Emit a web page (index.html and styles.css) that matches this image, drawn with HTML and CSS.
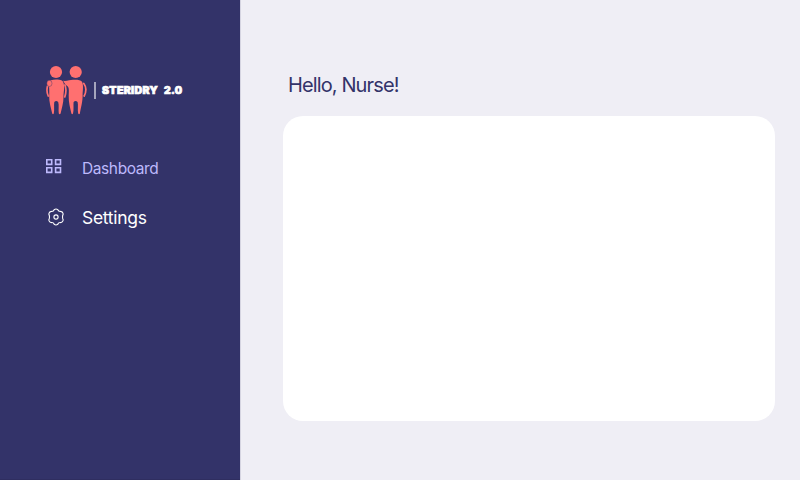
FILE: index.html
```html
<!DOCTYPE html>
<html lang="en">
<head>
<meta charset="utf-8">
<title>Steridry 2.0</title>
<link rel="stylesheet" href="styles.css">
</head>
<body>
<div class="app">
  <aside class="sidebar">
    <div class="brand">
      <svg class="brand-figures" viewBox="0 0 42 50" width="42" height="50">
        <circle cx="10" cy="7" r="6.1"/>
        <circle cx="29.7" cy="7" r="6.1"/>
        <path d="M5 15.2C8 14.4 13 14.4 15.8 15.4C17.5 16.5 18.2 19 18.2 23C18 26 17.4 29 17.5 32C17.6 38 15.5 44 14.6 48.6Q13.7 49.8 12.8 48.6C12.2 45 13.2 40 12.2 37Q10.2 34.8 8.3 37C7.7 40 8.6 45 7.8 48.6Q7 49.8 6.2 48.6C5 43 3 37 3.2 31C3.4 27 3.3 24 3 21C2.6 18 3.4 15.7 5 15.2Z"/>
        <path d="M17.2 15.8C21 16.2 24 14.9 27 14.8C31 14.6 34.5 14.8 36 16.8C37.5 19.5 37 25 36.6 29C36.9 37 34.6 43 33.9 48.6Q33 49.8 32.2 48.6C31.4 45 32.4 40 31.6 37Q29.6 34.8 27.6 37C27.2 40 28 45 27 48.6Q26.2 49.8 25.4 48.6C24.2 43 22.5 37 22.7 31C22.9 27 23.2 23 21.8 21.5C19.5 20 18.4 18.5 17.2 15.8Z"/>
        <path class="arm" d="M1.5 21C.8 24 .8 28 2.2 31M18.9 20C20.2 23 20.4 27 18.8 32M37.8 18.5C40.4 22 40.2 27 38.2 31"/>
        <ellipse class="hand" cx="3.4" cy="18.4" rx="2.6" ry="3.1"/>
      </svg>
      <span class="divider"></span>
      <svg class="wordmark" width="83" height="14" viewBox="0 0 83 14"><text x="1" y="11" textLength="56" lengthAdjust="spacingAndGlyphs">STERIDRY</text><text x="63" y="11" textLength="18.5" lengthAdjust="spacingAndGlyphs">2.0</text></svg>
    </div>
    <nav class="menu">
      <a class="item active">
        <svg class="icon-grid" width="16" height="16" viewBox="0 0 16 16"><path d="M.8 1.8h4.9v4.6H.8zM9.6 1.8h4.9v4.6H9.6zM.8 9.8h4.9v4.6H.8zM9.6 9.8h4.9v4.6H9.6z"/></svg>
        <span>Dashboard</span>
      </a>
      <a class="item settings">
        <svg class="icon-gear" width="18" height="18" viewBox="0 0 18 18"><path d="M7.2 1.7Q9 .3 10.8 1.7Q11.6 3.7 13.7 3.4Q16 3.7 16.2 6Q14.8 9 16.2 12Q16 14.3 13.7 14.6Q11.6 14.3 10.8 16.3Q9 17.7 7.2 16.3Q6.4 14.3 4.3 14.6Q2 14.3 1.8 12Q3.2 9 1.8 6Q2 3.7 4.3 3.4Q6.4 3.7 7.2 1.7Z"/><circle cx="9" cy="9" r="2.1"/></svg>
        <span>Settings</span>
      </a>
    </nav>
  </aside>
  <main class="content">
    <h1 class="greeting">Hello, Nurse!</h1>
    <section class="panel"></section>
  </main>
</div>
</body>
</html>
```
FILE: styles.css
```css
* { box-sizing: border-box; }
body { margin: 0; font-family: Inter, "Liberation Sans", sans-serif; }
.app { display: flex; width: 800px; height: 480px; background: #efeef5; }
.sidebar { width: 240px; padding: 65px 0 0 46px; background: #333369; border-bottom: 1px solid #2f2e60; box-shadow: 1px 0 0 #d5d4e1; }
.brand { display: flex; align-items: center; height: 50px; }
.brand-figures { fill: #ff7070; }
.arm { fill: none; stroke: #ff7070; stroke-width: 1.7; stroke-linecap: round; }
.hand { stroke: #333369; stroke-width: .4; }
.divider { width: 2px; height: 17px; margin: 0 5px 0 6px; background: #a5a5bd; }
.wordmark text { font: 900 10.5px Inter, sans-serif; letter-spacing: .3px; fill: #fff; stroke: #fff; stroke-width: .7; }
.menu { padding-top: 41px; }
.item { display: flex; align-items: center; height: 24px; }
.active { color: #bdb9fc; font-size: 15.5px; letter-spacing: -.4px; }
.icon-grid { margin: -4px 20px 0 0; fill: none; stroke: #bdb9fc; stroke-width: 1.6; }
.settings { margin-top: 25px; color: #fff; font-size: 17.5px; letter-spacing: -.3px; }
.icon-gear { margin: -1px 17px 0 1px; fill: none; stroke: #fff; stroke-width: 1.1; }
.content { width: 560px; padding: 70px 25px 0 43px; }
.greeting { height: 30px; margin: 0 0 16px 5px; color: #333369; font-size: 20px; font-weight: 400; line-height: 30px; letter-spacing: -.88px; }
.panel { height: 305px; background: #fff; border-radius: 20px; }
```
